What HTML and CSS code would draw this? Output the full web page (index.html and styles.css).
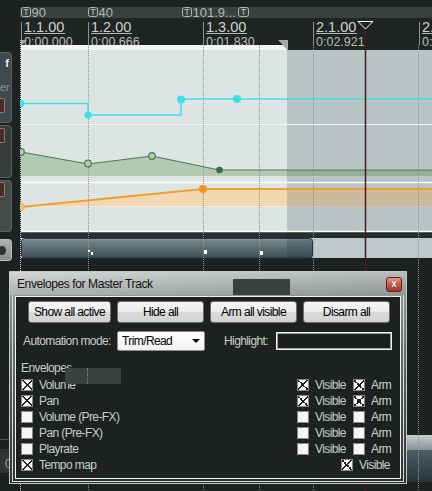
FILE: index.html
```html
<!DOCTYPE html>
<html lang="en">
<head>
    <meta charset="UTF-8">
    <title>Envelopes for Master Track</title>
    <link rel="stylesheet" href="styles.css">
</head>
<body>
    <div class="app">
        <div class="tcp">
            <div class="track t1"><span class="tname">f</span><span class="tsub">er</span><span class="tbtn"></span></div>
            <div class="track t2"><span class="tbtn"></span></div>
            <div class="track t3"><span class="tbtn"></span></div>
            <div class="track t4"><span class="ticon"></span></div>
            <div class="tcp-line"></div>
            <div class="tcp-foot">0</div>
        </div>

        <svg class="arrange" width="412" height="491" viewBox="20 0 412 491">
            <defs>
                <linearGradient id="itemGrad" x1="0" y1="0" x2="0" y2="1">
                    <stop offset="0" stop-color="#8a9ea4"/>
                    <stop offset="0.15" stop-color="#6e8288"/>
                    <stop offset="1" stop-color="#3e4e54"/>
                </linearGradient>
                <linearGradient id="lowBand" x1="0" y1="0" x2="0" y2="1">
                    <stop offset="0" stop-color="#c4cccc"/>
                    <stop offset="1" stop-color="#8a9494"/>
                </linearGradient>
                <linearGradient id="lowItem" x1="0" y1="0" x2="0" y2="1">
                    <stop offset="0" stop-color="#4c5e66"/>
                    <stop offset="1" stop-color="#28343a"/>
                </linearGradient>
            </defs>

            <rect class="bg" x="20" y="0" width="412" height="491"/>
            <rect class="tempo-band" x="20" y="7" width="412" height="11"/>
            <rect class="ruler" x="20" y="18" width="412" height="32"/>

            <!-- tempo markers -->
            <g class="tempo-box">
                <rect x="21.5" y="7.5" width="9" height="9" rx="2"/>
                <rect x="88.5" y="7.5" width="9" height="9" rx="2"/>
                <rect x="182.5" y="7.5" width="9" height="9" rx="2"/>
                <rect x="238.5" y="7.5" width="10" height="9" rx="2"/>
            </g>
            <g class="tempo-t">
                <text x="26" y="15">T</text>
                <text x="93" y="15">T</text>
                <text x="187" y="15">T</text>
                <text x="243.5" y="15">T</text>
            </g>
            <g class="tempo-txt">
                <text x="31.5" y="17">90</text>
                <text x="98.5" y="17">40</text>
                <text x="192.5" y="17">101.9...</text>
            </g>

            <!-- ruler -->
            <g class="tick">
                <line x1="21.5" y1="22" x2="21.5" y2="45"/>
                <line x1="88.5" y1="22" x2="88.5" y2="45"/>
                <line x1="203.5" y1="22" x2="203.5" y2="45"/>
                <line x1="313.5" y1="22" x2="313.5" y2="45"/>
                <line x1="419.5" y1="22" x2="419.5" y2="45"/>
            </g>
            <g class="bar-txt">
                <text x="24" y="32">1.1.00</text>
                <text x="91" y="32">1.2.00</text>
                <text x="206" y="32">1.3.00</text>
                <text x="316" y="32">2.1.00</text>
                <text x="422" y="32">2.2.00</text>
            </g>
            <g class="bar-line">
                <line x1="24" y1="33.5" x2="65" y2="33.5"/>
                <line x1="91" y1="33.5" x2="132" y2="33.5"/>
                <line x1="206" y1="33.5" x2="247" y2="33.5"/>
                <line x1="316" y1="33.5" x2="357" y2="33.5"/>
                <line x1="422" y1="33.5" x2="463" y2="33.5"/>
            </g>
            <g class="time-txt">
                <text x="24" y="46">0:00.000</text>
                <text x="91" y="46">0:00.666</text>
                <text x="206" y="46">0:01.830</text>
                <text x="316" y="46">0:02.921</text>
                <text x="422" y="46">0:03.500</text>
            </g>

            <!-- time selection in ruler -->
            <polygon class="sel-strip" points="21,45 283,45 288,50 21,50"/>
            <polygon class="sel-mark" points="21,40 27,40 21,46"/>
            <polygon class="sel-mark" points="278,40 288,40 288,50"/>

            <!-- envelope lanes -->
            <rect class="lane" x="21" y="50" width="411" height="182"/>
            <polygon class="green-fill" points="21,152 88,164 152,156 219,170 432,170 432,176 21,176"/>
            <polygon class="orange-fill" points="21,207 203,189 432,189 432,206 21,206"/>
            <line class="orange-edge" x1="21" y1="206.5" x2="432" y2="206.5"/>

            <rect class="gap-band" x="21" y="232" width="411" height="6"/>
            <rect class="item-lane" x="21" y="238" width="411" height="20"/>
            <rect class="item" x="21.5" y="238.5" width="291" height="19.5" rx="3"/>

            <rect class="unsel" x="287" y="50" width="145" height="208"/>

            <line class="sep-soft" x1="21" y1="124.5" x2="432" y2="124.5"/>
            <line class="sep" x1="21" y1="182.5" x2="432" y2="182.5"/>
            <line class="sep" x1="21" y1="231.5" x2="432" y2="231.5"/>

            <rect class="low-band" x="20" y="435" width="412" height="15"/>
            <rect class="low-item" x="20" y="450" width="412" height="32"/>

            <!-- grid -->
            <line class="grid-edge" x1="20.5" y1="40" x2="20.5" y2="491"/>
            <g class="grid">
                <line x1="88.5" y1="45" x2="88.5" y2="491"/>
                <line x1="203.5" y1="45" x2="203.5" y2="491"/>
                <line x1="259.5" y1="45" x2="259.5" y2="491"/>
                <line x1="313.5" y1="45" x2="313.5" y2="491"/>
                <line x1="418.5" y1="45" x2="418.5" y2="491"/>
            </g>

            <!-- item markers -->
            <g class="item-mark">
                <rect x="88" y="250" width="2" height="2"/>
                <rect x="91" y="252" width="2" height="3"/>
                <rect x="204" y="250" width="3" height="4"/>
                <rect x="260" y="251" width="3" height="4"/>
            </g>

            <!-- volume envelope -->
            <polyline class="cyan" points="21,103.5 88,103.5 88,115 181,115 181,99 432,99"/>
            <g class="cyan-pt">
                <circle cx="21" cy="103.5" r="3.5"/>
                <circle cx="88" cy="115" r="3.5"/>
                <circle cx="181" cy="99.5" r="4"/>
                <circle cx="237" cy="99" r="4"/>
            </g>

            <!-- pan envelope -->
            <polyline class="green" points="21,152 88,164 152,156 219,170 432,170"/>
            <g class="green-pt">
                <circle cx="21" cy="152" r="3.3"/>
                <circle cx="88" cy="163.5" r="3.3"/>
                <circle cx="152" cy="156" r="3.3"/>
            </g>
            <circle class="green-dot" cx="219.5" cy="170" r="3.3"/>

            <!-- tempo envelope -->
            <polyline class="orange" points="21,207 203,189 432,189"/>
            <circle class="orange-open" cx="21" cy="207" r="3.5"/>
            <circle class="orange-dot" cx="203" cy="189" r="4"/>

            <!-- edit cursor -->
            <line class="cursor" x1="365.5" y1="29" x2="365.5" y2="491"/>
            <polygon class="cursor-head" points="358,21.5 373,21.5 365.5,29"/>
        </svg>
    </div>

    <div class="dialog">
        <div class="dlg-title">
            <h1>Envelopes for Master Track</h1>
            <span class="title-blot"></span>
            <span class="close">x</span>
        </div>
        <div class="dlg-body">
            <div class="dlg-wrap">
                <div class="panel">
                    <div class="btn-row">
                        <button class="btn first">Show all active</button>
                        <button class="btn">Hide all</button>
                        <button class="btn">Arm all visible</button>
                        <button class="btn">Disarm all</button>
                    </div>

                    <div class="mode-row">
                        <span class="lbl mode-lbl">Automation mode:</span>
                        <span class="select">Trim/Read<span class="caret"></span></span>
                        <span class="lbl hl-lbl">Highlight:</span>
                        <span class="hl-input"></span>
                    </div>

                    <div class="lbl env-title">Envelopes</div>
                    <span class="panel-blot"></span>

                    <div class="env-list">
                        <div class="env-row">
                            <span class="cb on"></span><span class="lbl name">Volume</span>
                            <span class="vis"><span class="cb on"></span><span class="lbl name">Visible</span></span>
                            <span class="arm"><span class="cb on"></span><span class="lbl name">Arm</span></span>
                        </div>
                        <div class="env-row">
                            <span class="cb on"></span><span class="lbl name">Pan</span>
                            <span class="vis"><span class="cb on"></span><span class="lbl name">Visible</span></span>
                            <span class="arm"><span class="cb on"></span><span class="lbl name">Arm</span></span>
                        </div>
                        <div class="env-row">
                            <span class="cb"></span><span class="lbl name">Volume (Pre-FX)</span>
                            <span class="vis"><span class="cb"></span><span class="lbl name">Visible</span></span>
                            <span class="arm"><span class="cb"></span><span class="lbl name">Arm</span></span>
                        </div>
                        <div class="env-row">
                            <span class="cb"></span><span class="lbl name">Pan (Pre-FX)</span>
                            <span class="vis"><span class="cb"></span><span class="lbl name">Visible</span></span>
                            <span class="arm"><span class="cb"></span><span class="lbl name">Arm</span></span>
                        </div>
                        <div class="env-row">
                            <span class="cb"></span><span class="lbl name">Playrate</span>
                            <span class="vis"><span class="cb"></span><span class="lbl name">Visible</span></span>
                            <span class="arm"><span class="cb"></span><span class="lbl name">Arm</span></span>
                        </div>
                        <div class="env-row">
                            <span class="cb on"></span><span class="lbl name">Tempo map</span>
                            <span class="vis last"><span class="cb on"></span><span class="lbl name">Visible</span></span>
                        </div>
                    </div>
                </div>
            </div>
        </div>
    </div>
</body>
</html>
```

FILE: styles.css
```css
* {
    box-sizing: border-box;
}

body {
    margin: 0;
    width: 432px;
    height: 491px;
    overflow: hidden;
    position: relative;
    background: #1c2220;
    font-family: "Liberation Sans", Arial, sans-serif;
}

.app {
    display: flex;
    height: 491px;
}

/* track control panel */
.tcp {
    width: 20px;
    flex: none;
    display: flex;
    flex-direction: column;
    padding-top: 52px;
}

.track {
    width: 12px;
    margin-bottom: 2px;
    background: #3c4a4e;
    border: 1px solid #56605f;
    border-left: none;
    border-radius: 0 4px 4px 0;
    overflow: hidden;
}

.t1 { height: 71px; }
.t2 { height: 53px; background: #383e3c; }
.t3 { height: 52px; background: #464b49; margin-bottom: 7px; }
.t4 { height: 22px; background: linear-gradient(#aab2b2, #858d8d); border-color: #b8c0c0; }

.tname {
    display: block;
    padding: 4px 2px 0 0;
    text-align: right;
    color: #eef2f2;
    font-size: 11px;
    font-weight: bold;
    line-height: 12px;
}

.tsub {
    display: block;
    margin-top: 12px;
    color: #8a9696;
    font-size: 11px;
    line-height: 12px;
}

.tbtn {
    display: block;
    width: 5px;
    height: 15px;
    margin-top: 5px;
    background: #4a2b27;
    border: 1px solid #8c7a72;
    border-left: none;
    border-radius: 0 2px 2px 0;
}

.t2 .tbtn { margin-top: 2px; }
.t3 .tbtn { margin-top: 1px; }

.ticon {
    display: block;
    width: 8px;
    height: 9px;
    margin: 6px 0 0 -2px;
    border-radius: 50%;
    background: #2c3232;
}

.tcp-line {
    width: 9px;
    height: 1px;
    margin-top: 176px;
    background: #4c5452;
}

.tcp-foot {
    width: 12px;
    height: 24px;
    margin-top: 9px;
    padding-top: 8px;
    background: #2e3533;
    color: #98a0a0;
    font-size: 13px;
    line-height: 14px;
    text-align: right;
    overflow: hidden;
}

/* arrange view */
.arrange {
    display: block;
    flex: none;
}

.bg { fill: #1c2220; }
.tempo-band { fill: #3a403d; }
.ruler { fill: #1f2522; }

.tempo-box rect { fill: none; stroke: #b4b8b4; stroke-width: 1; }
.tempo-t text { fill: #c0c4c0; font-size: 9px; text-anchor: middle; }
.tempo-txt text { fill: #b4b8b4; font-size: 13px; }

.tick line { stroke: #8c908c; stroke-width: 1; }
.bar-txt text { fill: #cfd3cf; font-size: 14.5px; }
.bar-line line { stroke: #b4b8b4; stroke-width: 1; }
.time-txt text { fill: #b8bcb8; font-size: 12.5px; }

.sel-strip { fill: #f4f6f6; }
.sel-mark { fill: #a6aaaa; }

.lane { fill: #dce4e4; }
.green-fill { fill: #b2cab2; }
.orange-fill { fill: #f2d8b2; }
.orange-edge { stroke: #f6e8d6; stroke-width: 1; }
.gap-band { fill: #283030; }
.item-lane { fill: #e2eaea; }
.item { fill: url(#itemGrad); stroke: #2a363a; stroke-width: 1; }
.unsel { fill: #0c2828; opacity: 0.17; }

.sep-soft { stroke: #eef3f3; stroke-width: 1; }
.sep { stroke: #ffffff; stroke-width: 1.5; }

.low-band { fill: url(#lowBand); }
.low-item { fill: url(#lowItem); }

.grid-edge { stroke: #cfd6d6; stroke-width: 1; stroke-dasharray: 1 1; }
.grid line { stroke: #8a9494; stroke-width: 1; stroke-dasharray: 1 1; }

.item-mark rect { fill: #f4f8f8; }

.cyan { fill: none; stroke: #3ee0e8; stroke-width: 1.5; }
.cyan-pt circle { fill: #3ee0e8; }

.green { fill: none; stroke: #4a7a52; stroke-width: 1.2; }
.green-pt circle { fill: #b2cab2; stroke: #4a7a52; stroke-width: 1.2; }
.green-dot { fill: #3c6a44; }

.orange { fill: none; stroke: #f0a030; stroke-width: 1.8; }
.orange-open { fill: #f0c080; stroke: #e8a848; stroke-width: 1; }
.orange-dot { fill: #f3961e; }

.cursor { stroke: #4e1a1a; stroke-width: 1.5; }
.cursor-head { fill: #1f2522; stroke: #ffffff; stroke-width: 1; }

/* dialog */
.dialog {
    position: absolute;
    left: 9px;
    top: 271px;
    width: 398px;
    height: 213px;
    display: flex;
    flex-direction: column;
    border: 1px solid #c4c8c8;
    background: linear-gradient(#a4a8a8, #6a6e6e 35%, #2c3030);
}

.dlg-title {
    position: relative;
    flex: none;
    height: 23px;
    display: flex;
    align-items: center;
    padding-left: 7px;
    background: linear-gradient(90deg, rgba(255, 255, 255, 0.12), rgba(0, 0, 0, 0.1)),
                linear-gradient(#cdd1d1, #b4b8b8 55%, #a2a6a6);
}

.dlg-title h1 {
    margin: 0;
    color: #111;
    font-size: 12px;
    font-weight: normal;
    letter-spacing: -0.4px;
}

.title-blot {
    position: absolute;
    left: 223px;
    top: 7px;
    width: 57px;
    height: 16px;
    background: #3a403e;
}

.close {
    align-self: flex-start;
    width: 16px;
    height: 15px;
    margin: 5px 4px 0 auto;
    border: 1px solid #5c2019;
    border-radius: 3px;
    background: linear-gradient(#e49a90, #c85a48 50%, #a83424);
    color: #fff;
    font-size: 10px;
    font-weight: bold;
    line-height: 12px;
    text-align: center;
    text-shadow: 0 0 1px #501010;
}

.dlg-body {
    flex: 1;
    padding: 0 2px 1px;
}

.dlg-wrap {
    height: 100%;
    padding: 1px 2px 2px;
    border: 1px solid #dcdede;
    border-top: none;
}

.panel {
    position: relative;
    height: 100%;
    padding-top: 4px;
    border: 1px solid #f2f2f2;
    background: #1d2220;
}

.btn-row {
    display: flex;
    gap: 6px;
    padding-left: 12px;
}

.btn {
    width: 87px;
    height: 22px;
    padding: 0;
    border: 1px solid #6c6c6c;
    border-radius: 3px;
    background: linear-gradient(#f6f6f6, #ececec 48%, #dadada 52%, #d2d2d2);
    color: #000;
    font-family: "Liberation Sans", Arial, sans-serif;
    font-size: 12px;
    letter-spacing: -0.6px;
}

.btn.first { width: 83px; }

.lbl {
    color: #c6cecb;
    font-size: 12px;
    letter-spacing: -0.6px;
    white-space: nowrap;
}

.mode-row {
    display: flex;
    align-items: center;
    height: 20px;
    margin-top: 8px;
    padding-left: 7px;
}

.mode-lbl { width: 94px; }

.select {
    display: flex;
    align-items: center;
    width: 88px;
    height: 20px;
    padding-left: 4px;
    border: 1px solid #8c8c8c;
    border-radius: 2px;
    background: linear-gradient(#ffffff, #f0f0f0);
    color: #000;
    font-size: 12px;
    letter-spacing: -0.6px;
}

.caret {
    width: 0;
    height: 0;
    margin: 0 4px 0 auto;
    border-left: 4px solid transparent;
    border-right: 4px solid transparent;
    border-top: 4px solid #000;
}

.hl-lbl {
    width: 52px;
    margin-left: 19px;
}

.hl-input {
    width: 116px;
    height: 18px;
    border: 1px solid #f0f0f0;
    box-shadow: inset 0 0 0 1px #a0a0a0;
    background: #1a1e1c;
}

.env-title {
    margin-top: 10px;
    padding-left: 5px;
    line-height: 14px;
}

.panel-blot {
    position: absolute;
    left: 49px;
    top: 71px;
    width: 56px;
    height: 16px;
    background: #3c4240;
    opacity: 0.95;
}

.panel-blot::after {
    content: "";
    position: absolute;
    left: 22px;
    top: 0;
    height: 16px;
    border-left: 1px dotted #8a9494;
}

.env-list {
    margin-top: 2px;
}

.env-row {
    display: flex;
    align-items: center;
    height: 16px;
    padding: 0 12px 0 5px;
}

.cb {
    flex: none;
    width: 12px;
    height: 12px;
    border: 1px solid #8a8a8a;
    background: #f6f6f6;
}

.cb.on {
    background:
        linear-gradient(45deg, transparent 45%, #222 45%, #222 55%, transparent 55%),
        linear-gradient(-45deg, transparent 45%, #222 45%, #222 55%, transparent 55%),
        #f6f6f6;
}

.name {
    margin-left: 6px;
}

.vis {
    display: flex;
    align-items: center;
    width: 47px;
    margin-left: auto;
}

.arm {
    display: flex;
    align-items: center;
    width: 35px;
    margin-left: 9px;
}
```
